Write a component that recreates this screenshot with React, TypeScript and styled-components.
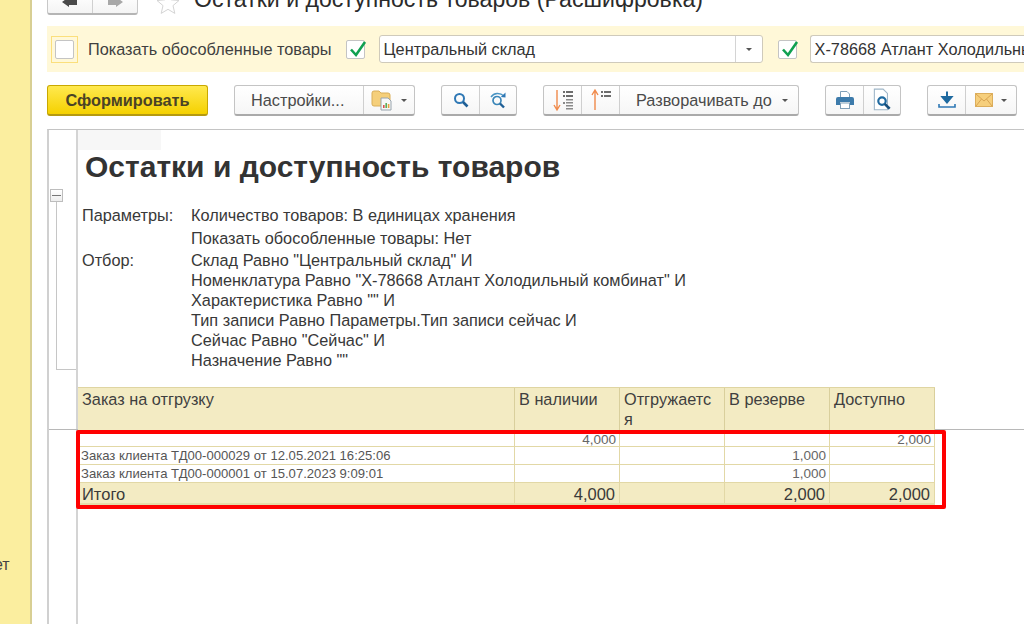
import styled, { createGlobalStyle } from 'styled-components';

const FONT = '"Liberation Sans", Arial, sans-serif';

const PARAMS = [
  { label: 'Параметры:', value: 'Количество товаров: В единицах хранения', height: 23 },
  { label: '', value: 'Показать обособленные товары: Нет', height: 22 },
  { label: 'Отбор:', value: 'Склад Равно "Центральный склад" И', height: 20 },
  { label: '', value: 'Номенклатура Равно "Х-78668 Атлант Холодильный комбинат" И', height: 20 },
  { label: '', value: 'Характеристика Равно "" И', height: 20 },
  { label: '', value: 'Тип записи Равно Параметры.Тип записи сейчас И', height: 20 },
  { label: '', value: 'Сейчас Равно "Сейчас" И', height: 20 },
  { label: '', value: 'Назначение Равно ""', height: 20 },
];

const HEADERS = ['Заказ на отгрузку', 'В наличии', 'Отгружается', 'В резерве', 'Доступно'];

const ROWS = [
  { name: '', values: ['4,000', '', '', '2,000'], height: 14 },
  { name: 'Заказ клиента ТД00-000029 от 12.05.2021 16:25:06', values: ['', '', '1,000', ''], height: 18 },
  { name: 'Заказ клиента ТД00-000001 от 15.07.2023 9:09:01', values: ['', '', '1,000', ''], height: 18 },
];

const TOTAL = { name: 'Итого', values: ['4,000', '', '2,000', '2,000'] };

const GlobalStyle = createGlobalStyle`
  html, body {
    margin: 0;
    padding: 0;
    width: 1024px;
    height: 624px;
    overflow: hidden;
    background: #fff;
    font-family: ${FONT};
    color: #3a3a3a;
  }
`;

const Page = styled.div`
  display: flex;
  width: 1024px;
  height: 624px;
  overflow: hidden;
`;

const Sidebar = styled.aside`
  width: 30px;
  flex: none;
  background: #fbee9f;
  border-right: 2px solid #d8cf94;
  box-sizing: content-box;
  padding-top: 556px;
  height: 68px;
  overflow: hidden;
  font-size: 16px;
  line-height: 18px;
  color: #444;

  span {
    display: block;
    margin-left: -6px;
  }
`;

const Main = styled.main`
  flex: 1;
  min-width: 0;
  padding-left: 15px;
  display: flex;
  flex-direction: column;
`;

const TitleRow = styled.div`
  height: 15px;
  display: flex;
  align-items: flex-end;
  overflow: hidden;
`;

const NavGroup = styled.div`
  width: 91px;
  height: 22px;
  flex: none;
  display: flex;
  background: linear-gradient(#fff, #f4f4f4);
  border: 1px solid #c8c8c8;
  border-bottom: 2px solid #b5b5b5;
  border-radius: 3px;
  box-sizing: border-box;
`;

const NavButton = styled.div<{ $divider?: boolean }>`
  flex: 1;
  display: flex;
  align-items: center;
  justify-content: center;
  border-right: ${(p) => (p.$divider ? '1px solid #d0d0d0' : 'none')};
`;

const Star = styled.svg`
  flex: none;
  margin: 0 0 0 18px;
`;

const PageTitle = styled.h1`
  margin: 0 0 3px 14px;
  font-size: 23.1px;
  line-height: 26px;
  height: 26px;
  font-weight: 400;
  color: #2b2b2b;
  white-space: nowrap;
`;

const FilterBar = styled.div`
  margin-top: 11px;
  height: 46px;
  background: #fff8d8;
  display: flex;
  align-items: center;
  overflow: hidden;
  white-space: nowrap;
`;

const FocusFrame = styled.div`
  width: 27px;
  height: 27px;
  margin-left: 4px;
  flex: none;
  box-sizing: border-box;
  border: 1px solid #fbdf7c;
  background: #fff8d8;
  display: flex;
  align-items: center;
  justify-content: center;
`;

const CheckBox = styled.div<{ $size: number; $left?: number }>`
  width: ${(p) => p.$size}px;
  height: ${(p) => p.$size}px;
  margin-left: ${(p) => p.$left ?? 0}px;
  flex: none;
  position: relative;
  box-sizing: border-box;
  background: #fff;
  border: 1px solid #c4c4c4;
  border-radius: 2px;
`;

const CheckMark = styled.svg`
  position: absolute;
  left: 1px;
  top: -4px;
`;

const FilterLabel = styled.span`
  margin: 0 14px 0 10px;
  font-size: 16.3px;
  color: #404040;
`;

const Combo = styled.div<{ $width: string; $left: number; $open?: boolean }>`
  width: ${(p) => p.$width};
  height: 28px;
  margin-left: ${(p) => p.$left}px;
  flex: none;
  box-sizing: border-box;
  background: #fff;
  border: 1px solid #cfcabb;
  border-right-width: ${(p) => (p.$open ? '0' : '1px')};
  border-radius: 3px;
  display: flex;
  align-items: center;
  font-size: 16.3px;
  color: #333;
`;

const ComboText = styled.span`
  flex: 1;
  padding-left: 4px;
`;

const ComboArrow = styled.span`
  width: 26px;
  height: 100%;
  flex: none;
  border-left: 1px solid #d4d4d4;
  display: flex;
  align-items: center;
  justify-content: center;
`;

const Caret = styled.i`
  display: block;
  width: 0;
  height: 0;
  flex: none;
  border-left: 3px solid transparent;
  border-right: 3px solid transparent;
  border-top: 3px solid #555;
`;

const Toolbar = styled.div`
  margin-top: 13px;
  height: 31px;
  display: flex;
  align-items: stretch;
`;

const PrimaryButton = styled.button`
  width: 161px;
  height: 31px;
  padding: 0;
  flex: none;
  box-sizing: border-box;
  background: linear-gradient(#ffe94f, #f5d100);
  border: 1px solid #c9a800;
  border-bottom: 2px solid #b59a10;
  border-radius: 3px;
  font: bold 16.3px ${FONT};
  color: #4a4326;
`;

const Group = styled.div<{ $left: number }>`
  display: flex;
  flex: none;
  margin-left: ${(p) => p.$left}px;
  height: 31px;
  box-sizing: border-box;
  background: linear-gradient(#fff, #f6f6f6);
  border: 1px solid #c4c4c4;
  border-bottom: 2px solid #aaa;
  border-radius: 3px;
`;

const GroupCell = styled.div<{ $width: number; $last?: boolean; $pad?: number }>`
  width: ${(p) => p.$width}px;
  box-sizing: border-box;
  display: flex;
  align-items: center;
  justify-content: ${(p) => (p.$pad ? 'flex-start' : 'center')};
  padding-left: ${(p) => p.$pad ?? 0}px;
  gap: ${(p) => (p.$pad ? 10 : 8)}px;
  border-right: ${(p) => (p.$last ? 'none' : '1px solid #cfcfcf')};
  font-size: 16.3px;
  white-space: nowrap;
  color: #4a4a4a;
`;

const Report = styled.section`
  margin-top: 13px;
  flex: 1;
  min-height: 0;
  border-top: 1px solid #c4c4c4;
  border-left: 2px solid #d0d0d0;
  display: flex;
  flex-direction: column;
`;

const ReportTop = styled.div`
  height: 299px;
  flex: none;
  display: flex;
  border-bottom: 1px solid #b8b8b8;
`;

const Outline = styled.div`
  width: 27px;
  flex: none;
  box-sizing: content-box;
  border-right: 2px solid #d4d4d4;
  padding-top: 59px;
  display: flex;
  flex-direction: column;
  align-items: flex-start;
`;

const Collapse = styled.div`
  width: 13px;
  height: 13px;
  margin-left: 1px;
  flex: none;
  box-sizing: border-box;
  border: 1px solid #bdbdbd;
  background: linear-gradient(#fff, #eee);
  display: flex;
  align-items: center;
  justify-content: center;

  &::after {
    content: '';
    width: 9px;
    height: 1px;
    background: #777;
  }
`;

const OutlineLine = styled.div`
  width: 20px;
  height: 168px;
  margin-left: 7px;
  flex: none;
  box-sizing: border-box;
  border-left: 1px solid #c6c6c6;
  border-bottom: 1px solid #c6c6c6;
`;

const ReportBody = styled.div`
  flex: 1;
  min-width: 0;
  display: flex;
  flex-direction: column;
`;

const CornerCell = styled.div`
  width: 83px;
  height: 20px;
  flex: none;
  background: #f7f7f7;
`;

const ReportTitle = styled.h2`
  margin: 0 0 0 7px;
  height: 34px;
  font-size: 30px;
  line-height: 34px;
  font-weight: 700;
  white-space: nowrap;
  color: #333;
`;

const ParamList = styled.div`
  margin-top: 21px;
  display: flex;
  flex-direction: column;
`;

const ParamRow = styled.div<{ $height: number }>`
  height: ${(p) => p.$height}px;
  display: grid;
  grid-template-columns: 109px 1fr;
  padding-left: 4px;
  font-size: 16.3px;
  line-height: 20px;
  color: #383838;
  white-space: nowrap;
`;

const COLUMNS = '437px 105px 105px 105px 105px';

const HeaderGrid = styled.div`
  margin-top: 17px;
  width: 857px;
  height: 43px;
  flex: none;
  display: grid;
  grid-template-columns: ${COLUMNS};
  background: #f3ebc3;
  border-top: 1px solid #dfd5a2;
  box-sizing: border-box;
`;

const HeaderCell = styled.div`
  padding: 1px 8px 0 4px;
  box-sizing: border-box;
  border-right: 1px solid #d9cf9c;
  font-size: 16.3px;
  line-height: 20px;
  color: #3f3f3f;
  word-break: break-all;
`;

const ReportBottom = styled.div`
  flex: 1;
  min-height: 0;
  position: relative;
  display: flex;
`;

const Gutter = styled.div`
  width: 27px;
  flex: none;
  box-sizing: content-box;
  border-right: 2px solid #d4d4d4;
`;

const Rows = styled.div`
  flex: 1;
  min-width: 0;
  padding-top: 3px;
`;

const DataRow = styled.div<{ $height: number; $total?: boolean }>`
  width: 857px;
  height: ${(p) => p.$height}px;
  display: grid;
  grid-template-columns: ${COLUMNS};
  box-sizing: border-box;
  background: ${(p) => (p.$total ? '#f3ebc3' : '#fff')};
  border-bottom: ${(p) => (p.$total ? '2px solid #e4dbab' : '1px solid #e2d8a6')};
  font-size: ${(p) => (p.$total ? '16.5px' : '13.1px')};
  color: ${(p) => (p.$total ? '#3a3a3a' : '#555')};
`;

const DataCell = styled.div<{ $total?: boolean }>`
  padding: ${(p) => (p.$total ? '2px 4px 0' : '0 3px')};
  box-sizing: border-box;
  display: flex;
  align-items: center;
  overflow: hidden;
  white-space: nowrap;
  border-right: 1px solid #e2d8a6;
`;

const AmountCell = styled(DataCell)`
  justify-content: flex-end;
  font-size: ${(p) => (p.$total ? '16.5px' : '13.5px')};
  color: ${(p) => (p.$total ? '#3a3a3a' : '#666')};
`;

const Highlight = styled.div`
  position: absolute;
  left: 27px;
  top: 0;
  width: 870px;
  height: 79px;
  box-sizing: border-box;
  border: 4px solid #ff0000;
  border-radius: 2px;
  pointer-events: none;
`;

const Tick = () => (
  <CheckMark width="22" height="24" viewBox="0 0 22 24">
    <path d="M3 12.5 L8 18 L17 5" fill="none" stroke="#10a050" strokeWidth="2.6" />
  </CheckMark>
);

const SearchIcon = () => (
  <svg width="18" height="18" viewBox="0 0 18 18">
    <circle cx="7.5" cy="7.5" r="4.5" fill="none" stroke="#2f78b5" strokeWidth="2" />
    <path d="M11 11 L15.5 15.5" stroke="#1f5f96" strokeWidth="2.6" />
  </svg>
);

const SearchAgainIcon = () => (
  <svg width="20" height="20" viewBox="0 0 20 20">
    <circle cx="9" cy="10.5" r="4" fill="none" stroke="#3a86b8" strokeWidth="1.7" />
    <path d="M12 13.5 L16 17.5" stroke="#1f5f96" strokeWidth="2.4" />
    <path d="M3 7 C6 2.5 12 2.5 16 6" fill="none" stroke="#4b95c4" strokeWidth="1.4" />
    <path d="M17.5 2.5 L17.5 7.5 L12.8 7 Z" fill="#2f78b5" />
  </svg>
);

const FolderIcon = () => (
  <svg width="22" height="22" viewBox="0 0 22 22">
    <path d="M1 4 Q1 2 3 2 H8 L10 4 H17 Q19 4 19 6 V17 H3 Q1 17 1 15 Z" fill="#f5cf7a" stroke="#d9ae58" />
    <path d="M10 9 H17 L20 12 V21 H10 Z" fill="#f7f7f7" stroke="#98a4ad" />
    <rect x="12" y="16" width="1.6" height="3" fill="#d9534f" />
    <rect x="14.4" y="14" width="1.6" height="5" fill="#5cae5c" />
    <rect x="16.8" y="15" width="1.6" height="4" fill="#e6a53c" />
  </svg>
);

const ListArrowIcon = ({ down }: { down?: boolean }) => (
  <svg width="22" height="24" viewBox="0 0 22 24">
    {down ? (
      <path d="M5 2 V21 M2 17 L5 22 L8 17" fill="none" stroke="#f08a4b" strokeWidth="1.4" />
    ) : (
      <path d="M5 22 V3 M2 7 L5 2 L8 7" fill="none" stroke="#f08a4b" strokeWidth="1.4" />
    )}
    <g fill="#6d6d6d">
      <rect x="11" y="3" width="2" height="2" />
      <rect x="14" y="3" width="7" height="2" />
      <rect x="11" y="7" width="2" height="2" />
      <rect x="14" y="7" width="7" height="2" />
    </g>
    {down && (
      <g fill="#8a8a8a">
        <rect x="14" y="11" width="7" height="1.5" />
        <rect x="11" y="14" width="2" height="2" />
        <rect x="14" y="14" width="7" height="1.5" />
        <rect x="14" y="17" width="7" height="1.5" />
        <rect x="14" y="20" width="7" height="1.5" />
      </g>
    )}
  </svg>
);

const PrintIcon = () => (
  <svg width="20" height="20" viewBox="0 0 20 20">
    <path d="M5.5 7 V1.5 H12 L14.5 4 V7" fill="#fff" stroke="#7f9fb8" />
    <path d="M1 9 Q1 7 3 7 H17 Q19 7 19 9 V15 H15 V12 H5 V15 H1 Z" fill="#3d7bab" />
    <rect x="5.5" y="13" width="9" height="5.5" fill="#fff" stroke="#7f9fb8" />
  </svg>
);

const PreviewIcon = () => (
  <svg width="22" height="24" viewBox="0 0 20 22">
    <path d="M3 1 H11 L15 5 V20 H3 Z" fill="#fff" stroke="#9fb6c8" />
    <circle cx="10" cy="12" r="3.4" fill="none" stroke="#1f6aa0" strokeWidth="2" />
    <path d="M12.5 14.5 L17 19" stroke="#174f7c" strokeWidth="2.4" />
  </svg>
);

const DownloadIcon = () => (
  <svg width="20" height="20" viewBox="0 0 20 20">
    <path d="M10 1.5 V10 M5.5 7 L10 12.5 L14.5 7 Z" fill="#1f6aa0" stroke="#1f6aa0" strokeWidth="2" />
    <path d="M2 14 V17 H18 V14" fill="none" stroke="#2f78b5" strokeWidth="1.6" />
  </svg>
);

const MailIcon = () => (
  <svg width="18" height="14" viewBox="0 0 18 14">
    <rect x="0.5" y="0.5" width="17" height="13" fill="#f6cf7c" stroke="#dcae5c" />
    <path d="M1 1 L9 8 L17 1 M1 13 L6.5 6 M17 13 L11.5 6" fill="none" stroke="#d9a451" />
  </svg>
);

const App = () => {
  return (
    <Page>
      <GlobalStyle />
      <Sidebar>
        <span>ет</span>
      </Sidebar>
      <Main>
        <TitleRow>
          <NavGroup>
            <NavButton $divider>
              <svg width="16" height="14" viewBox="0 0 16 14">
                <path d="M0 5 L7 0 V3 H15 V8 H7 V10 Z" fill="#4a4a4a" />
              </svg>
            </NavButton>
            <NavButton>
              <svg width="16" height="14" viewBox="0 0 16 14">
                <path d="M16 5 L9 0 V3 H1 V8 H9 V10 Z" fill="#a8a8a8" />
              </svg>
            </NavButton>
          </NavGroup>
          <Star width="24" height="24" viewBox="0 0 24 24">
            <path
              d="M12 1.5 L15 8.8 L23 9.5 L17 14.6 L18.8 22.4 L12 18.3 L5.2 22.4 L7 14.6 L1 9.5 L9 8.8 Z"
              fill="#fff"
              stroke="#d4d4d4"
            />
          </Star>
          <PageTitle>Остатки и доступность товаров (Расшифровка)</PageTitle>
        </TitleRow>

        <FilterBar>
          <FocusFrame>
            <CheckBox $size={19} />
          </FocusFrame>
          <FilterLabel>Показать обособленные товары</FilterLabel>
          <CheckBox $size={19}>
            <Tick />
          </CheckBox>
          <Combo $width="384px" $left={14}>
            <ComboText>Центральный склад</ComboText>
            <ComboArrow>
              <Caret />
            </ComboArrow>
          </Combo>
          <CheckBox $size={19} $left={15}>
            <Tick />
          </CheckBox>
          <Combo $width="240px" $left={13} $open>
            <ComboText>Х-78668 Атлант Холодильный комбинат</ComboText>
          </Combo>
        </FilterBar>

        <Toolbar>
          <PrimaryButton>Сформировать</PrimaryButton>
          <Group $left={26}>
            <GroupCell $width={129} $pad={16}>
              Настройки...
            </GroupCell>
            <GroupCell $width={50} $last>
              <FolderIcon />
              <Caret />
            </GroupCell>
          </Group>
          <Group $left={26}>
            <GroupCell $width={38}>
              <SearchIcon />
            </GroupCell>
            <GroupCell $width={36} $last>
              <SearchAgainIcon />
            </GroupCell>
          </Group>
          <Group $left={26}>
            <GroupCell $width={38}>
              <ListArrowIcon down />
            </GroupCell>
            <GroupCell $width={38}>
              <ListArrowIcon />
            </GroupCell>
            <GroupCell $width={178} $last $pad={16}>
              Разворачивать до
              <Caret />
            </GroupCell>
          </Group>
          <Group $left={26}>
            <GroupCell $width={38}>
              <PrintIcon />
            </GroupCell>
            <GroupCell $width={36} $last>
              <PreviewIcon />
            </GroupCell>
          </Group>
          <Group $left={26}>
            <GroupCell $width={38}>
              <DownloadIcon />
            </GroupCell>
            <GroupCell $width={50} $last>
              <MailIcon />
              <Caret />
            </GroupCell>
          </Group>
        </Toolbar>

        <Report>
          <ReportTop>
            <Outline>
              <Collapse />
              <OutlineLine />
            </Outline>
            <ReportBody>
              <CornerCell />
              <ReportTitle>Остатки и доступность товаров</ReportTitle>
              <ParamList>
                {PARAMS.map((param, index) => (
                  <ParamRow key={`param-${index}`} $height={param.height}>
                    <span>{param.label}</span>
                    <span>{param.value}</span>
                  </ParamRow>
                ))}
              </ParamList>
              <HeaderGrid>
                {HEADERS.map((header) => (
                  <HeaderCell key={header}>{header}</HeaderCell>
                ))}
              </HeaderGrid>
            </ReportBody>
          </ReportTop>
          <ReportBottom>
            <Gutter />
            <Rows>
              {ROWS.map((row, index) => (
                <DataRow key={`row-${index}`} $height={row.height}>
                  <DataCell>{row.name}</DataCell>
                  {row.values.map((value, valueIndex) => (
                    <AmountCell key={`value-${valueIndex}`}>{value}</AmountCell>
                  ))}
                </DataRow>
              ))}
              <DataRow $height={22} $total>
                <DataCell $total>{TOTAL.name}</DataCell>
                {TOTAL.values.map((value, valueIndex) => (
                  <AmountCell key={`total-${valueIndex}`} $total>
                    {value}
                  </AmountCell>
                ))}
              </DataRow>
            </Rows>
            <Highlight />
          </ReportBottom>
        </Report>
      </Main>
    </Page>
  );
};

export default App;
